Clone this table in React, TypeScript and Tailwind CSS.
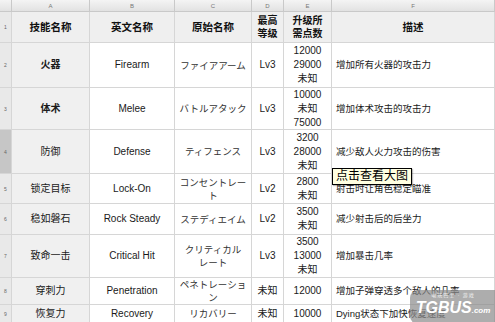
const cols = ["A", "B", "C", "D", "E", "F"];

type Row = {
  h: string;
  name: string;
  en: string;
  jp: string[];
  lv: string;
  pts: string[];
  desc: string;
  bold?: boolean;
};

const rows: Row[] = [
  { h: "h-[45px]", name: "火器", en: "Firearm", jp: ["ファイアアーム"], lv: "Lv3", pts: ["12000", "29000", "未知"], desc: "增加所有火器的攻击力", bold: true },
  { h: "h-[42px]", name: "体术", en: "Melee", jp: ["バトルアタック"], lv: "Lv3", pts: ["10000", "未知", "75000"], desc: "增加体术攻击的攻击力", bold: true },
  { h: "h-[44px]", name: "防御", en: "Defense", jp: ["ティフェンス"], lv: "Lv3", pts: ["3200", "28000", "未知"], desc: "减少敌人火力攻击的伤害" },
  { h: "h-[30px]", name: "锁定目标", en: "Lock-On", jp: ["コンセントレー", "ト"], lv: "Lv2", pts: ["2800", "未知"], desc: "射击时让角色稳定瞄准" },
  { h: "h-[31px]", name: "稳如磐石", en: "Rock Steady", jp: ["ステディエイム"], lv: "Lv2", pts: ["3500", "未知"], desc: "减少射击后的后坐力" },
  { h: "h-[43px]", name: "致命一击", en: "Critical Hit", jp: ["クリティカル", "レート"], lv: "Lv3", pts: ["3500", "13000", "未知"], desc: "增加暴击几率" },
  { h: "h-[27px]", name: "穿刺力", en: "Penetration", jp: ["ペネトレーショ", "ン"], lv: "未知", pts: ["12000"], desc: "增加子弹穿透多个敌人的几率" },
  { h: "h-[18px]", name: "恢复力", en: "Recovery", jp: ["リカバリー"], lv: "未知", pts: ["10000"], desc: "Dying状态下加快恢复速度" },
];

const cell =
  "border-r border-b border-[#d6d6d6] flex items-center justify-center text-center whitespace-nowrap overflow-hidden";

export default function App() {
  return (
    <div
      className="relative w-[495px] h-[322px] overflow-hidden bg-white text-[#1a1a1a] text-[9.5px] leading-[14px]"
      style={{ fontFamily: '"Liberation Sans", "Noto Sans CJK SC", sans-serif' }}
    >
      <div className="grid grid-cols-[12px_78px_85px_77px_32px_48px_163px]">
        {/* column letters */}
        <div className="h-[12px] border-r border-b border-[#c9c9c9] bg-gradient-to-b from-[#f4f4f4] to-[#e2e2e2]" />
        {cols.map((c) => (
          <div
            key={c}
            className="h-[12px] border-r border-b border-[#c9c9c9] bg-gradient-to-b from-[#f4f4f4] to-[#e2e2e2] flex items-center justify-center text-[6px] leading-none text-[#777]"
          >
            {c}
          </div>
        ))}

        {/* header row */}
        <div className="h-[31px] border-r border-b border-[#d6d6d6] bg-[#e9e9e9] flex items-center justify-center text-[5px] text-[#666]">1</div>
        <div className={`${cell} h-[31px] bg-[#efefef] font-bold text-[10.5px] text-[#111]`}>技能名称</div>
        <div className={`${cell} h-[31px] bg-[#efefef] font-bold text-[10.5px] text-[#111]`}>英文名称</div>
        <div className={`${cell} h-[31px] bg-[#efefef] font-bold text-[10.5px] text-[#111]`}>原始名称</div>
        <div className={`${cell} h-[31px] bg-[#efefef] font-bold text-[10px] leading-[13px] text-[#111]`}>
          最高<br />等级
        </div>
        <div className={`${cell} h-[31px] bg-[#efefef] font-bold text-[10px] leading-[13px] text-[#111]`}>
          升级所<br />需点数
        </div>
        <div className={`${cell} h-[31px] bg-[#efefef] font-bold text-[10.5px] text-[#111]`}>描述</div>

        {rows.map((r, i) => (
          <div key={r.name} className="contents">
            <div
              className={`${r.h} border-r border-b border-[#d6d6d6] flex items-center justify-center text-[5px] text-[#666] ${
                i === 2 ? "bg-[#c6c6c6]" : "bg-[#e9e9e9]"
              }`}
            >
              {i + 2}
            </div>
            <div className={`${cell} ${r.h} bg-[#f0f0f0] text-[10px] ${r.bold ? "font-bold" : ""}`}>{r.name}</div>
            <div className={`${cell} ${r.h} text-[10px]`}>{r.en}</div>
            <div className={`${cell} ${r.h} flex-col text-[9.5px] leading-[13px] text-[#333]`}>
              {r.jp.map((t) => (
                <span key={t}>{t}</span>
              ))}
            </div>
            <div className={`${cell} ${r.h} text-[10px]`}>{r.lv}</div>
            <div className={`${cell} ${r.h} flex-col text-[10px]`}>
              {r.pts.map((p, k) => (
                <span key={k}>{p}</span>
              ))}
            </div>
            <div className={`${r.h} border-r border-b border-[#d6d6d6] flex items-center pl-[4px] whitespace-nowrap overflow-hidden`}>
              {r.desc}
            </div>
          </div>
        ))}
      </div>

      {/* tooltip */}
      <div className="absolute left-[332px] top-[168px] w-[80px] h-[17px] border border-black bg-[#ffffe1] text-[12px] leading-[15px] text-black flex items-center justify-center shadow-[1px_1px_1px_rgba(0,0,0,0.25)]">
        点击查看大图
      </div>

      {/* watermark */}
      <div className="absolute left-[410px] top-[290px] w-[86px] h-[34px] rounded-l-[8px] bg-[#8a8a8a]/70 flex flex-col items-center pt-[2px]">
        <span className="text-[5px] leading-[6px] text-white/80 tracking-[1px]">电玩巴士 · 游戏</span>
        <span className="text-[16px] leading-[20px] font-bold italic text-white">
          TGBUS<span className="text-[8px]">.com</span>
        </span>
      </div>
    </div>
  );
}
